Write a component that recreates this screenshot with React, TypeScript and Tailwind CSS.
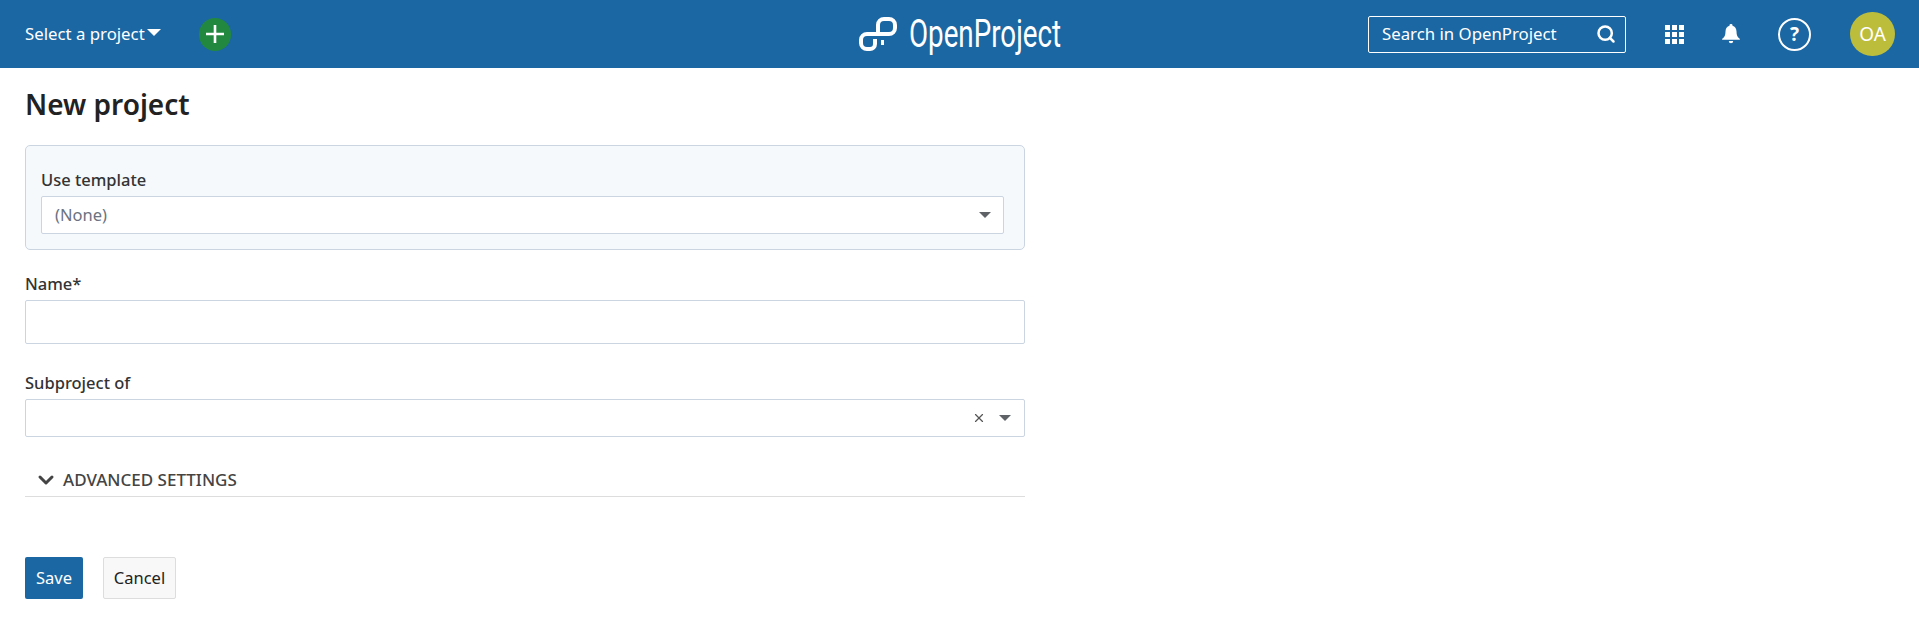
import { ChevronDown, Search, X } from 'lucide-react';

const font = "font-['Noto_Sans','Open_Sans',sans-serif]";

function Caret({ className }: { className: string }) {
  return (
    <svg viewBox="0 0 12 6" className={className} fill="currentColor">
      <path d="M0 0h12L6 6z" />
    </svg>
  );
}

function LogoMark() {
  return (
    <svg viewBox="0 0 38 34" className="h-[34px] w-[38px]" fill="none" stroke="white" strokeWidth="4">
      <path d="M19 17V8a6 6 0 0 1 6-6h5a6 6 0 0 1 6 6v3a6 6 0 0 1-6 6H8a6 6 0 0 0-6 6v3a6 6 0 0 0 6 6h3a5 5 0 0 0 5-5v-5" />
      <path d="M23.500 23v5" strokeWidth="3" />
    </svg>
  );
}

function GridIcon() {
  return (
    <div className="grid h-[19px] w-[19px] grid-cols-3 gap-[2px]">
      {Array.from({ length: 9 }).map((_, i) => (
        <span key={i} className="bg-white" />
      ))}
    </div>
  );
}

function BellIcon() {
  return (
    <svg viewBox="0 0 18 20" className="ml-[38px] h-[20px] w-[18px]" fill="white">
      <path d="M9 0a1.500 1.500 0 0 1 1.500 1.700C13 2.400 14.500 4.600 14.500 7.500c0 4 1 5.800 3.200 7.300.4.300.2 1-.3 1H.6c-.5 0-.7-.7-.3-1C2.500 13.300 3.500 11.500 3.500 7.500c0-2.900 1.500-5.100 4-5.800A1.500 1.500 0 0 1 9 0z" />
      <path d="M6.800 17h4.400a2.200 2.200 0 0 1-4.400 0z" />
    </svg>
  );
}

function Header() {
  return (
    <header className="flex h-[68px] items-center bg-[#1a67a3] text-white">
      <div className="flex w-[859px] shrink-0 items-center pl-[25px]">
        <span className="w-[122px] text-[16.8px]">Select a project</span>
        <Caret className="mt-[-4px] h-[7px] w-[14px]" />
        <span className="ml-[38px] flex h-[33px] w-[32px] items-center justify-center rounded-full bg-[#23883f]">
          <svg viewBox="0 0 20 20" className="h-[20px] w-[20px]" stroke="white" strokeWidth="2.6">
            <path d="M10 1v18M1 10h18" />
          </svg>
        </span>
      </div>
      <div className="flex shrink-0 items-center gap-[12px]">
        <LogoMark />
        <span className="w-[152px] origin-left scale-x-[0.73] whitespace-nowrap font-['Roboto'] text-[38px] font-normal leading-none">
          OpenProject
        </span>
      </div>
      <div className="flex flex-1 items-center justify-end">
        <div className="flex h-[37px] w-[258px] items-center justify-between rounded-[2px] border border-white pl-[13px] pr-[9px]">
          <span className="text-[16.8px]">Search in OpenProject</span>
          <Search size={20} strokeWidth={3} />
        </div>
        <div className="ml-[39px]">
          <GridIcon />
        </div>
        <BellIcon />
        <span className="ml-[38px] flex h-[33px] w-[33px] items-center justify-center rounded-full border-2 border-white text-[19px] font-bold">
          ?
        </span>
        <span className="ml-[39px] mr-[24px] flex h-[44px] w-[45px] items-center justify-center rounded-full bg-[#bdbd3c] text-[19px]">
          OA
        </span>
      </div>
    </header>
  );
}

function Label({ children }: { children: string }) {
  return <label className="block text-[16.5px] font-medium leading-[21px] text-[#333]">{children}</label>;
}

export default function App() {
  return (
    <div className={`${font} min-h-[624px] bg-white`}>
      <Header />
      <main className="w-[1025px] pl-[25px]">
        <h1 className="mt-[17px] text-[28px] font-semibold leading-[38px] text-[#222]">New project</h1>

        <div className="mt-[22px] h-[105px] rounded-[5px] border border-[#cbd5e1] bg-[#f5f9fc] pl-[15px] pr-[20px] pt-[23px]">
          <Label>Use template</Label>
          <div className="mt-[6px] flex h-[38px] items-center justify-between rounded-[2px] border border-[#cbd5e1] bg-white pl-[13px] pr-[12px]">
            <span className="text-[16.5px] text-[#6b7280]">(None)</span>
            <Caret className="h-[6px] w-[12px] text-[#5f6368]" />
          </div>
        </div>

        <div className="mt-[23px]">
          <Label>Name*</Label>
          <div className="mt-[6px] h-[44px] rounded-[2px] border border-[#cbd5e1]" />
        </div>

        <div className="mt-[28px]">
          <Label>Subproject of</Label>
          <div className="mt-[6px] flex h-[38px] items-center justify-end gap-[13px] rounded-[2px] border border-[#cbd5e1] pr-[13px]">
            <X size={14} className="text-[#555]" />
            <Caret className="h-[6px] w-[12px] text-[#5f6368]" />
          </div>
        </div>

        <div className="mt-[30px] flex h-[30px] items-center border-b border-[#ddd] pb-[4px] pl-[9px] text-[#444]">
          <ChevronDown size={24} strokeWidth={3} />
          <span className="ml-[5px] text-[17px] font-medium">ADVANCED SETTINGS</span>
        </div>

        <div className="mt-[60px] flex gap-[20px]">
          <button className="h-[42px] w-[58px] rounded-[2px] bg-[#1a67a3] text-[16.5px] text-white">Save</button>
          <button className="h-[42px] w-[73px] rounded-[2px] border border-[#ddd] bg-[#f8f8f8] text-[16.5px] text-[#222]">
            Cancel
          </button>
        </div>
      </main>
    </div>
  );
}
